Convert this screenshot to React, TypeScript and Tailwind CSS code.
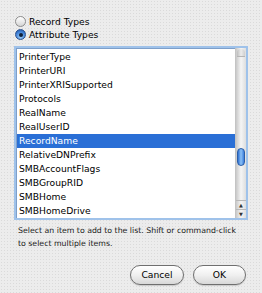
const attributes = [
  "PrinterType",
  "PrinterURI",
  "PrinterXRISupported",
  "Protocols",
  "RealName",
  "RealUserID",
  "RecordName",
  "RelativeDNPrefix",
  "SMBAccountFlags",
  "SMBGroupRID",
  "SMBHome",
  "SMBHomeDrive",
];

function Radio({ checked, label }: { checked?: boolean; label: string }) {
  return (
    <div className="flex items-center h-[13px]">
      {checked ? (
        <span className="w-[11px] h-[11px] rounded-full border border-[#2a4f8c] bg-[radial-gradient(circle_at_50%_75%,#9fd0fa,#3d7fd6_60%,#1e4f9e)] flex items-center justify-center">
          <span className="w-[4px] h-[4px] rounded-full bg-[#0d1f3a]" />
        </span>
      ) : (
        <span className="w-[11px] h-[11px] rounded-full border border-[#8c8c8c] bg-gradient-to-b from-[#ffffff] to-[#d6d6d6]" />
      )}
      <span className="ml-[3px] text-[9.2px] leading-[13px]">{label}</span>
    </div>
  );
}

function Scrollbar() {
  return (
    <div className="w-[11px] h-full flex flex-col bg-gradient-to-r from-[#c9c9c9] via-[#f5f5f5] to-[#dedede] border-l border-[#c4c4c4]">
      {/* top cap */}
      <div className="h-[8px] mx-[1px] mt-[1px] rounded-t-full bg-gradient-to-r from-[#bdbdbd] via-[#ececec] to-[#cfcfcf] border-b border-[#b5b5b5]" />
      <div className="h-[91px]" />
      {/* thumb */}
      <div className="h-[18px] mx-[1px] rounded-full border border-[#2b5ea8] bg-gradient-to-r from-[#2f6fd0] via-[#8cc2f7] to-[#3b7ddb]" />
      <div className="flex-1" />
      {/* arrows */}
      <div className="h-[9px] border-t border-[#b8b8b8] flex items-center justify-center text-[5px] leading-none text-[#333]">
        ▲
      </div>
      <div className="h-[9px] border-t border-[#b8b8b8] flex items-center justify-center text-[5px] leading-none text-[#333]">
        ▼
      </div>
    </div>
  );
}

function Button({ label, width }: { label: string; width: string }) {
  return (
    <button
      className={`${width} h-[20px] rounded-full border border-[#6f6f6f] bg-gradient-to-b from-[#ffffff] via-[#f0f0f0] to-[#d8d8d8] shadow-[0_1px_1px_rgba(0,0,0,0.15)] text-[9.2px] leading-none text-black`}
    >
      {label}
    </button>
  );
}

export default function App() {
  const selected = "RecordName";

  return (
    <div className="w-[262px] h-[293px] bg-[#ececec] bg-[radial-gradient(#dadada_0.5px,transparent_0.7px)] bg-size-[3px_3px] font-['DejaVu_Sans',sans-serif] text-black flex flex-col">
      <div className="pl-[15px] pt-[15px] flex flex-col">
        <Radio label="Record Types" />
        <Radio checked label="Attribute Types" />
      </div>

      <div className="ml-[14px] mt-[5px] w-[234px] h-[174px] border-2 border-[#9fc2ea] bg-white flex">
        <ul className="flex-1 pt-[1px] border-l border-t border-[#7e9fc9]">
          {attributes.map((name) => (
            <li
              key={name}
              className={`h-[14px] leading-[14px] pl-[2px] text-[9.2px] ${
                name === selected ? "bg-[#2a6fd6] text-white" : ""
              }`}
            >
              {name}
            </li>
          ))}
        </ul>
        <Scrollbar />
      </div>

      <p className="mt-[4px] pl-[18px] text-[7.8px] leading-[13px] text-[#1a1a1a]">
        Select an item to add to the list. Shift or command-click
        <br />
        to select multiple items.
      </p>

      <div className="mt-[15px] pr-[16px] flex justify-end gap-[9px]">
        <Button label="Cancel" width="w-[54px]" />
        <Button label="OK" width="w-[53px]" />
      </div>
    </div>
  );
}
